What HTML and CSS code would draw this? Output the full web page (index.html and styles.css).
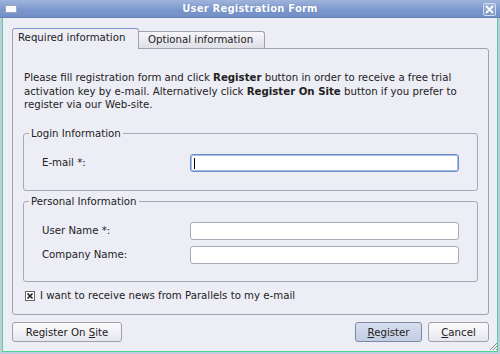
FILE: index.html
```html
<!DOCTYPE html>
<html>
<head>
<meta charset="utf-8">
<link rel="stylesheet" href="styles.css">
</head>
<body>
<div class="window">
  <div class="titlebar">
    <span class="winicon"></span>
    <span class="title">User Registration Form</span>
    <span class="closebtn">
      <svg width="9" height="9" viewBox="0 0 9 9"><path d="M1.5 1.5 L7.5 7.5 M7.5 1.5 L1.5 7.5" stroke="#fff" stroke-width="1.8" stroke-linecap="round"/></svg>
    </span>
  </div>
  <div class="client">
    <div class="tabs">
      <div class="tab active">Required information</div>
      <div class="tab">Optional information</div>
    </div>
    <div class="panel">
      <p class="intro">Please fill registration form and click <b>Register</b> button in order to receive a free trial<br>activation key by e-mail. Alternatively click <b>Register On Site</b> button if you prefer to<br>register via our Web-site.</p>
      <fieldset class="group login">
        <legend>Login Information</legend>
        <div class="rows">
          <div class="row"><span class="lbl">E-mail *:</span><div class="field focus"><span class="caret"></span></div></div>
        </div>
      </fieldset>
      <fieldset class="group personal">
        <legend>Personal Information</legend>
        <div class="rows">
          <div class="row"><span class="lbl">User Name *:</span><div class="field"></div></div>
          <div class="row"><span class="lbl">Company Name:</span><div class="field"></div></div>
        </div>
      </fieldset>
      <div class="check">
        <svg class="box" width="10" height="10" viewBox="0 0 10 10"><rect x="0.5" y="0.5" width="9" height="9" fill="#fff" stroke="#666"/><path d="M2.5 2.5 L7.5 7.5 M7.5 2.5 L2.5 7.5" stroke="#222" stroke-width="1.7"/></svg>
        <span>I want to receive news from Parallels to my e-mail</span>
      </div>
    </div>
    <div class="buttons">
      <div class="btn site"><span>Register On <u>S</u>ite</span></div>
      <div class="spacer"></div>
      <div class="btn default"><span><u>R</u>egister</span></div>
      <div class="btn cancel"><span><u>C</u>ancel</span></div>
    </div>
    <svg class="grip" width="10" height="10" viewBox="0 0 10 10"><path d="M9 2 L2 9 M9 5 L5 9 M9 8 L8 9" stroke="#8a8a96" stroke-width="1"/></svg>
  </div>
</div>
</body>
</html>
```
FILE: styles.css
```css
* { box-sizing: border-box; }
html, body { margin: 0; padding: 0; }
body {
  width: 500px;
  height: 354px;
  background: #b9c2da;
  font-family: "DejaVu Sans", "Liberation Sans", sans-serif;
  font-size: 10.2px;
  color: #222;
  overflow: hidden;
}
.window {
  width: 500px;
  height: 354px;
  display: flex;
  flex-direction: column;
}
.titlebar {
  height: 18px;
  flex: none;
  position: relative;
  display: flex;
  align-items: center;
  justify-content: center;
  background: linear-gradient(#9fb4dc, #7a96cb 60%, #7390c6);
  border-bottom: 1px solid #6580b4;
}
.winicon {
  position: absolute;
  left: 5px;
  top: 5px;
  width: 12px;
  height: 8px;
  background: #fbfbff;
  border: 1px solid #9aa6c2;
}
.title {
  color: #fff;
  font-weight: bold;
  font-size: 10px;
  letter-spacing: 0.2px;
  text-shadow: 0 0 1px #5a73a8;
}
.closebtn {
  position: absolute;
  right: 4px;
  top: 3px;
  width: 13px;
  height: 13px;
  border: 1px solid #d2dcf0;
  border-radius: 2px;
  background: linear-gradient(#9fb3da, #7e98c9);
  display: flex;
  align-items: center;
  justify-content: center;
}
.client {
  flex: 1;
  position: relative;
  background: #ededf5;
  border: 2px solid #c3cadf;
  border-top: none;
  box-shadow: inset 1px 0 0 #4fd590, inset -1px 0 0 #4fd590, inset 0 -1px 0 #4fd590;
  padding: 10px 9px 0 10px;
  display: flex;
  flex-direction: column;
}
.tabs {
  display: flex;
  align-items: flex-end;
  height: 20px;
}
.tab {
  height: 17px;
  width: 126px;
  border: 1px solid #a2a2ae;
  border-bottom: none;
  border-left: none;
  border-radius: 0 3px 0 0;
  background: linear-gradient(#f6f6fa, #dedee6);
  padding-left: 9px;
  line-height: 16px;
  white-space: nowrap;
  position: relative;
}
.tab.active {
  height: 21px;
  width: 127px;
  border-left: 1px solid #a2a2ae;
  border-top: 1px solid #7d95c8;
  border-radius: 3px 3px 0 0;
  background: #ededf5;
  padding-left: 5px;
  line-height: 17px;
  margin-bottom: -1px;
  z-index: 1;
}
.panel {
  height: 267px;
  border: 1px solid #a2a2ae;
  border-radius: 0 3px 3px 3px;
  background: #ededf5;
  padding: 22px 10px 0 10px;
  display: flex;
  flex-direction: column;
}
.intro {
  margin: 0;
  padding-left: 1px;
  line-height: 13.5px;
  white-space: nowrap;
}
.group {
  margin: 16px 0 0 0;
  padding: 0;
  border: 1px solid #a8a8b6;
  border-radius: 3px;
  min-width: 0;
}
.group legend {
  margin-left: 5px;
  padding: 0 2px;
  line-height: 12px;
}
.group.personal { margin-top: 5px; }
.rows {
  padding: 14px 18px 18px 18px;
  display: flex;
  flex-direction: column;
  gap: 6px;
}
.personal .rows { padding-bottom: 17px; }
.row {
  display: flex;
  align-items: center;
  height: 18px;
}
.lbl {
  width: 148px;
  flex: none;
  white-space: nowrap;
}
.field {
  flex: 1;
  height: 18px;
  background: #fff;
  border: 1px solid #a9a9b6;
  border-radius: 3px;
  position: relative;
}
.field.focus {
  border: 1px solid #6a8cc8;
  box-shadow: inset 0 0 0 1px #a9bde2;
}
.caret {
  position: absolute;
  left: 3px;
  top: 3px;
  width: 1px;
  height: 11px;
  background: #000;
}
.check {
  margin-top: 8px;
  padding-left: 2px;
  display: flex;
  align-items: center;
  gap: 5px;
  white-space: nowrap;
  line-height: 12px;
}
.check .box { flex: none; }
.buttons {
  margin-top: 7px;
  display: flex;
  gap: 6px;
  height: 20px;
}
.spacer { flex: 1; }
.btn {
  height: 20px;
  border: 1px solid #a0a0ac;
  border-radius: 3px;
  background: linear-gradient(#fbfbfd, #e6e6ee);
  display: flex;
  align-items: center;
  justify-content: center;
  white-space: nowrap;
}
.btn u { text-decoration: underline; text-underline-offset: 1px; }
.btn.site { width: 110px; }
.btn.default {
  width: 67px;
  border-color: #7c87a3;
  background: linear-gradient(#d6deef, #c3cde3);
}
.btn.cancel { width: 61px; }
.grip {
  position: absolute;
  right: 0px;
  bottom: 1px;
}
```
